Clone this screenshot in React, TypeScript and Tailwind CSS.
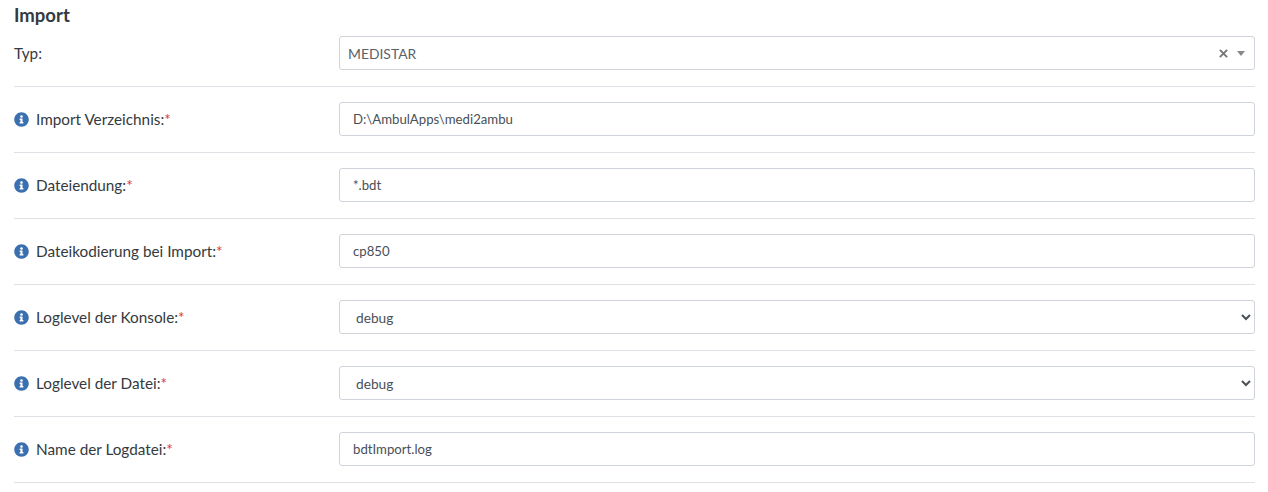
import React from 'react';

const font = { fontFamily: 'Lato, "Noto Sans", sans-serif' };

const InfoIcon = () => (
  <svg viewBox="0 0 512 512" className="w-[15px] h-[15px] shrink-0 fill-[#3a6fb0]">
    <path d="M256 8C119 8 8 119 8 256s111 248 248 248 248-111 248-248S393 8 256 8zm0 100c26 0 46 20 46 46s-20 46-46 46-46-20-46-46 20-46 46-46zm64 272c0 7-5 12-12 12h-104c-7 0-12-5-12-12v-28c0-7 5-12 12-12h14v-64h-14c-7 0-12-5-12-12v-28c0-7 5-12 12-12h76c7 0 12 5 12 12v104h16c7 0 12 5 12 12v28z" />
  </svg>
);

const Label = ({ text }: { text: string }) => (
  <label className="flex items-center gap-[7px] text-[15.3px] text-[#343a40]">
    <InfoIcon />
    <span>
      {text}:<span className="text-[#dc3545]">*</span>
    </span>
  </label>
);

const Row = ({ label, children }: { label: React.ReactNode; children: React.ReactNode }) => (
  <div className="flex items-center pt-[15px] pb-4 border-b border-[#dee2e6]">
    <div className="w-[325px] shrink-0">{label}</div>
    <div className="flex-1">{children}</div>
  </div>
);

const TextField = ({ value }: { value: string }) => (
  <input
    readOnly
    value={value}
    style={font}
    className="block w-full h-[34px] px-[13px] bg-white border border-[#ced4da] rounded-[3px] text-[13.2px] text-[#495057] outline-none"
  />
);

const SelectField = ({ value }: { value: string }) => (
  <select
    defaultValue={value}
    style={font}
    className="block w-full h-[34px] px-3 bg-white border border-[#ced4da] rounded-[3px] text-[13.7px] text-[#495057] outline-none"
  >
    <option value="debug">debug</option>
    <option value="info">info</option>
    <option value="warn">warn</option>
    <option value="error">error</option>
  </select>
);

export default function App() {
  return (
    <div style={font} className="w-[1268px] h-[492px] overflow-hidden bg-white pl-[14px] pr-[13px] pt-[5px]">
      <h5 className="text-[18.5px] leading-[21px] font-bold text-[#343a40] mb-[10px]">Import</h5>

      <div className="flex items-center pb-4 border-b border-[#dee2e6]">
        <div className="w-[325px] shrink-0 text-[15.3px] text-[#343a40]">Typ:</div>
        <div className="flex-1 flex items-center h-[34px] pl-[8px] pr-[9px] border border-[#ced4da] rounded-[3px] text-[13.9px] text-[#5a6268]">
          <span className="flex-1 pt-[2px]">MEDISTAR</span>
          <svg viewBox="0 0 10 10" className="w-[9px] h-[9px] stroke-[#777] mr-[9px]" strokeWidth="2.2">
            <path d="M1 1l8 8M9 1l-8 8" />
          </svg>
          <span className="w-0 h-0 border-x-[4px] border-x-transparent border-t-[5px] border-t-[#888]" />
        </div>
      </div>

      <Row label={<Label text="Import Verzeichnis" />}><TextField value="D:\AmbulApps\medi2ambu" /></Row>
      <Row label={<Label text="Dateiendung" />}><TextField value="*.bdt" /></Row>
      <Row label={<Label text="Dateikodierung bei Import" />}><TextField value="cp850" /></Row>
      <Row label={<Label text="Loglevel der Konsole" />}><SelectField value="debug" /></Row>
      <Row label={<Label text="Loglevel der Datei" />}><SelectField value="debug" /></Row>
      <Row label={<Label text="Name der Logdatei" />}><TextField value="bdtImport.log" /></Row>
    </div>
  );
}
